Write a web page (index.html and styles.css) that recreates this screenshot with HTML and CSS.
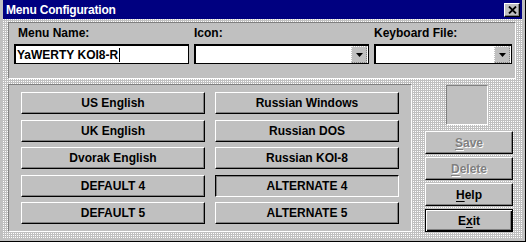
FILE: index.html
```html
<!DOCTYPE html>
<html lang="en">
<head>
    <meta charset="UTF-8">
    <title>Menu Configuration</title>
    <link rel="stylesheet" href="styles.css">
</head>
<body>
    <div class="window">
        <div class="titlebar">
            <span class="title">Menu Configuration</span>
            <div class="close-btn">
                <svg width="9" height="8" viewBox="0 0 9 8">
                    <path d="M1 0.5 L8 7.5 M8 0.5 L1 7.5" stroke="#000" stroke-width="1.8" fill="none"/>
                </svg>
            </div>
        </div>

        <div class="client">
            <div class="panel top-panel">
                <div class="field-label indent">Menu Name:</div>
                <div class="field-label">Icon:</div>
                <div class="field-label">Keyboard File:</div>

                <div class="textbox">YaWERTY KOI8-R<span class="caret"></span></div>
                <div class="combo">
                    <div class="combo-arrow">
                        <svg width="7" height="4" viewBox="0 0 7 4"><polygon points="0,0 7,0 3.5,4" fill="#000"/></svg>
                    </div>
                </div>
                <div class="combo">
                    <div class="combo-arrow">
                        <svg width="7" height="4" viewBox="0 0 7 4"><polygon points="0,0 7,0 3.5,4" fill="#000"/></svg>
                    </div>
                </div>
            </div>

            <div class="lower">
                <div class="panel layout-panel">
                    <div class="btn">US English</div>
                    <div class="btn">Russian Windows</div>
                    <div class="btn">UK English</div>
                    <div class="btn">Russian DOS</div>
                    <div class="btn">Dvorak English</div>
                    <div class="btn">Russian KOI-8</div>
                    <div class="btn">DEFAULT 4</div>
                    <div class="btn pressed">ALTERNATE 4</div>
                    <div class="btn">DEFAULT 5</div>
                    <div class="btn">ALTERNATE 5</div>
                </div>

                <div class="side">
                    <div class="icon-preview"></div>
                    <div class="side-buttons">
                        <div class="btn disabled"><u>S</u>ave</div>
                        <div class="btn disabled"><u>D</u>elete</div>
                        <div class="btn"><u>H</u>elp</div>
                        <div class="btn default">E<u>x</u>it</div>
                    </div>
                </div>
            </div>
        </div>
    </div>
</body>
</html>
```

FILE: styles.css
```css
* {
    margin: 0;
    padding: 0;
    box-sizing: border-box;
}

body {
    font-family: 'Liberation Sans', Arial, sans-serif;
    font-size: 12px;
    font-weight: bold;
    color: #000000;
    background-color: #c0c0c0;
}

.window {
    width: 526px;
    height: 242px;
    padding: 0 3px 3px 3px;
    background-color: #c0c0c0;
    border-right: 1px solid #000000;
    border-bottom: 1px solid #000000;
    display: flex;
    flex-direction: column;
}

.titlebar {
    height: 21px;
    background-color: #000080;
    color: #ffffff;
    display: flex;
    align-items: center;
    justify-content: space-between;
    padding: 0 2px 0 3px;
}

.title {
    font-size: 12px;
    letter-spacing: -0.2px;
}

.close-btn {
    width: 16px;
    height: 14px;
    background-color: #c0c0c0;
    border: 1px solid;
    border-color: #ffffff #000000 #000000 #ffffff;
    box-shadow: inset -1px -1px #808080;
    display: flex;
    align-items: center;
    justify-content: center;
}

/* dithered background */
.client {
    flex: 1;
    background-color: #c0c0c0;
    background-image:
        linear-gradient(transparent 1px, #c0c0c0 1px),
        linear-gradient(90deg, #ffffff 1px, #c0c0c0 1px);
    background-size: 2px 2px;
    padding: 3px 6px 6px 5px;
    display: flex;
    flex-direction: column;
    gap: 5px;
}

.panel {
    background-color: #c0c0c0;
    border: 1px solid;
    border-color: #808080 #ffffff #ffffff #808080;
}

.top-panel {
    height: 57px;
    display: grid;
    grid-template-columns: 175px 175px 138px;
    grid-template-rows: 15px 20px;
    column-gap: 5px;
    row-gap: 3px;
    padding: 3px 4px 0 5px;
}

.field-label {
    line-height: 15px;
}

.field-label.indent {
    padding-left: 4px;
}

.textbox,
.combo {
    background-color: #ffffff;
    border-style: solid;
    border-width: 2px 1px 1px 2px;
    border-color: #000000;
    height: 20px;
}

.textbox {
    display: flex;
    align-items: center;
    padding-left: 1px;
    line-height: 14px;
}

.caret {
    display: inline-block;
    width: 1px;
    height: 14px;
    background-color: #000000;
    margin-left: 1px;
}

.combo {
    display: flex;
    justify-content: flex-end;
    padding: 0 1px 0 0;
}

.combo-arrow {
    width: 16px;
    height: 17px;
    background-color: #c0c0c0;
    border: 1px dotted #ffffff;
    border-right-color: #808080;
    border-bottom-color: #808080;
    display: flex;
    align-items: center;
    justify-content: center;
}

.lower {
    flex: 1;
    display: flex;
    gap: 13px;
}

.layout-panel {
    width: 404px;
    display: grid;
    grid-template-columns: 184px 184px;
    grid-auto-rows: 22px;
    column-gap: 10px;
    row-gap: 5.5px;
    padding: 7px 0 0 12px;
}

.btn {
    background-color: #c0c0c0;
    border: 1px solid;
    border-color: #ffffff #000000 #000000 #ffffff;
    box-shadow: inset -1px -1px #808080;
    display: flex;
    align-items: center;
    justify-content: center;
    white-space: nowrap;
}

.btn u {
    text-decoration: underline;
    text-underline-offset: 2px;
}

.btn.pressed {
    border-color: #000000 #ffffff #ffffff #000000;
    box-shadow: inset 1px 1px #808080;
}

.btn.disabled {
    color: #808080;
    text-shadow: 1px 1px #ffffff;
}

.btn.default {
    border-color: #000000;
    box-shadow: inset 1px 1px #ffffff, inset -1px -1px #000000, inset -2px -2px #808080;
}

.side {
    width: 88px;
    display: flex;
    flex-direction: column;
    align-items: center;
    padding-top: 1px;
}

.icon-preview {
    width: 42px;
    height: 40px;
    margin-left: -4px;
    background-color: #c0c0c0;
    border: 1px solid;
    border-color: #808080 #ffffff #ffffff #808080;
}

.side-buttons {
    width: 88px;
    margin-top: 6px;
    display: flex;
    flex-direction: column;
    gap: 3px;
}

.side-buttons .btn {
    height: 23px;
}
```
